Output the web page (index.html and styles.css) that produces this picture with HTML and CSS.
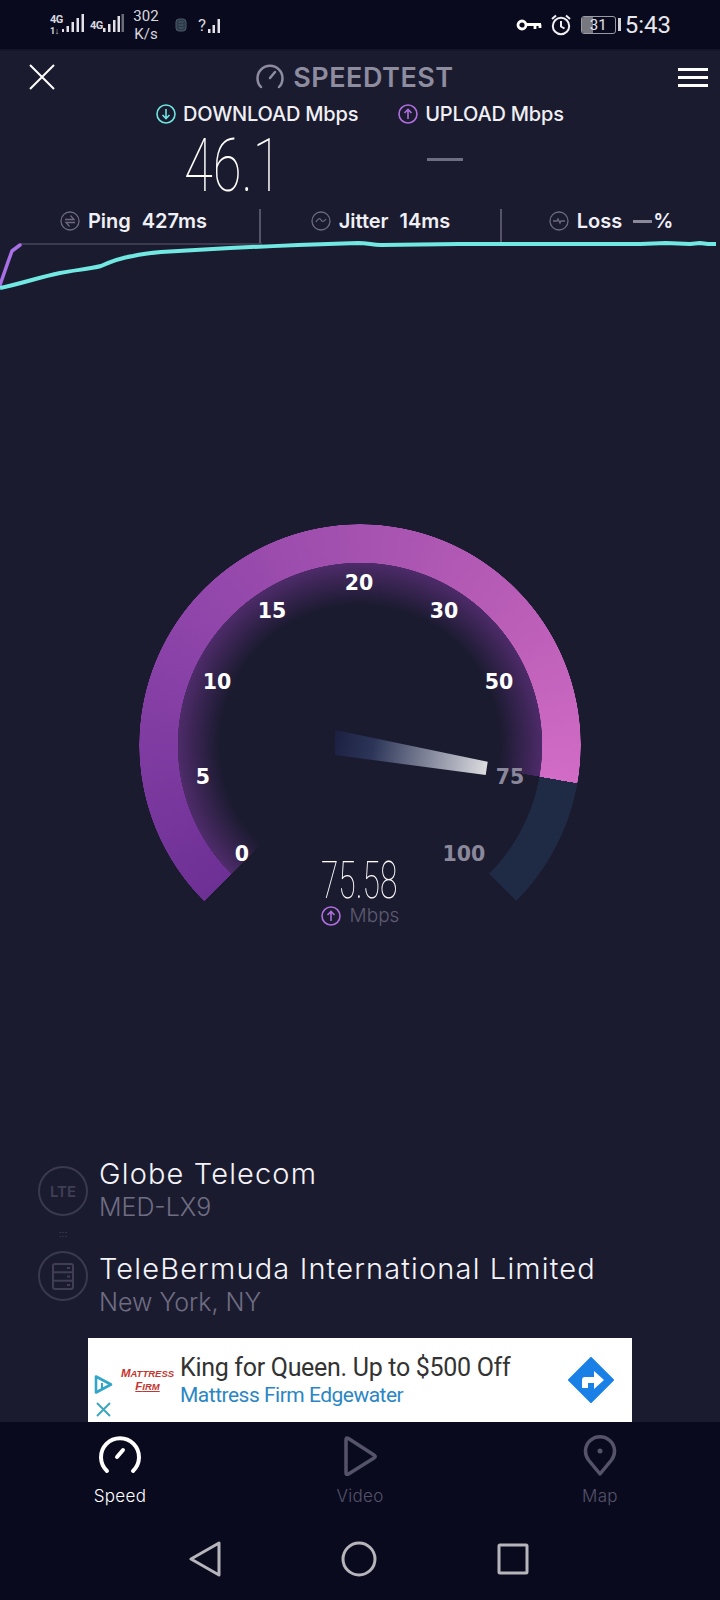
FILE: index.html
```html
<!DOCTYPE html>
<html lang="en">
<head>
  <meta charset="UTF-8">
  <meta name="viewport" content="width=device-width, initial-scale=1.0">
  <title>Speedtest</title>
  <link rel="stylesheet" href="styles.css">
</head>
<body>
  <div class="phone">
    <!-- status bar -->
    <div class="status">
      <div class="status-left">
        <div class="net-tag"><span>4G</span><span class="net-sub">1↓</span></div>
        <svg class="bars" width="22" height="20" viewBox="0 0 22 20"><path d="M0 16h2v3H0zM4.500 13H7v6H4.500zM9.500 9H12v10H9.500zM14.500 5H17v14h-2.500zM19.500 1H22v18h-2.500z"/></svg>
        <div class="net-tag net-tag-one"><span>4G</span></div>
        <svg class="bars" width="22" height="20" viewBox="0 0 22 20"><path d="M1 15h2.500v4H1zM6 11h2.500v8H6zM11 7h2.500v12H11zM15.500 3H18v16h-2.500z"/><path class="dim" d="M19.500 1H22v18h-2.500z"/></svg>
        <div class="rate"><span>302</span><span>K/s</span></div>
        <svg class="chip" width="12" height="14" viewBox="0 0 12 14"><rect x="1" y="1" width="10" height="12" rx="3"/><path d="M3.500 4h5M3.500 7h5M3.500 10h5"/></svg>
        <div class="wifi"><span>?</span><svg class="bars" width="12" height="14" viewBox="0 0 12 14"><path d="M0 10h2.500v4H0zM4.500 6H7v8H4.500zM9.500 0H12v14H9.500z"/></svg></div>
      </div>
      <div class="status-right">
        <svg class="key" width="26" height="14" viewBox="0 0 26 14"><circle cx="6" cy="7" r="4" /><path d="M10 6.500h15M19 6.500v4.500M24 6.500v3.500"/></svg>
        <svg class="alarm" width="22" height="22" viewBox="0 0 22 22"><circle cx="11" cy="12" r="8.200"/><path d="M11 7v5.500l3.500 2M2 5l4-3.500M20 5l-4-3.500"/></svg>
        <div class="battery"><div class="battery-box"><div class="battery-fill"></div><span>31</span></div><div class="battery-nub"></div></div>
        <div class="clock">5:43</div>
      </div>
    </div>

    <!-- header -->
    <div class="top">
      <svg class="close" width="26" height="26" viewBox="0 0 26 26"><path d="M1 1l24 24M25 1L1 25"/></svg>
      <div class="brand">
        <svg width="28" height="26" viewBox="0 0 28 26"><path d="M5 23a12.500 12.500 0 1 1 18 0M14 14l5-6"/></svg>
        <span>SPEEDTEST</span>
      </div>
      <div class="menu"><i></i><i></i><i></i></div>
    </div>

    <div class="legend">
      <div class="legend-item down">
        <svg width="20" height="20" viewBox="0 0 20 20"><circle cx="10" cy="10" r="9"/><path d="M10 5v9.500M6.500 11l3.500 3.500 3.500-3.500"/></svg>
        <span>DOWNLOAD Mbps</span>
      </div>
      <div class="legend-item up">
        <svg width="20" height="20" viewBox="0 0 20 20"><circle cx="10" cy="10" r="9"/><path d="M10 15V5.500M6.500 9L10 5.500 13.500 9"/></svg>
        <span>UPLOAD Mbps</span>
      </div>
    </div>

    <div class="values">
      <div class="value-down"><span>46.1</span></div>
      <div class="value-up"></div>
    </div>

    <div class="stats">
      <div class="stat stat-first">
        <svg width="20" height="20" viewBox="0 0 20 20"><circle cx="10" cy="10" r="9"/><path d="M5 8.500h9l-3.500-4M15 11.500H6l3.500 4"/></svg>
        <span class="stat-name">Ping</span><span>427ms</span>
      </div>
      <div class="stat stat-line">
        <svg width="20" height="20" viewBox="0 0 20 20"><circle cx="10" cy="10" r="9"/><path d="M5 11c2-4 4-4 5-2s3 2 5-1"/></svg>
        <span class="stat-name">Jitter</span><span>14ms</span>
      </div>
      <div class="stat stat-line">
        <svg width="20" height="20" viewBox="0 0 20 20"><circle cx="10" cy="10" r="9"/><path d="M4 10h4l1-2 2 4 1-2h4"/></svg>
        <span class="stat-name">Loss</span><span class="loss-value"><i></i>%</span>
      </div>
    </div>

    <svg class="chart" width="720" height="50" viewBox="0 240 720 50">
      <path class="chart-grid" d="M20 244H262"/>
      <path class="chart-up" d="M0 285L8 262 12 251 20 245"/>
      <path class="chart-down" d="M0 288C20 284 40 277 60 273 75 270 90 269 101 266 112 261 120 258 133 256 142 254 150 253 161 252L230 248C255 247 275 246 298 245L358 243C368 243 372 245 381 245L459 244 597 244 640 244 666 243 690 244 700 243 708 244 716 244"/>
    </svg>

    <!-- gauge -->
    <div class="gauge">
      <div class="gauge-glow"></div>
      <div class="gauge-ring"></div>
      <svg class="gauge-marks" width="442" height="442" viewBox="0 0 442 442">
        <defs>
          <linearGradient id="needle" gradientUnits="userSpaceOnUse" x1="196" y1="215" x2="348" y2="244">
            <stop offset="0" stop-color="#1c2142"/>
            <stop offset="0.25" stop-color="#2c3558"/>
            <stop offset="1" stop-color="#dcdce0"/>
          </linearGradient>
        </defs>
        <path d="M196 206L348.700 237.700 346.700 251 196 231z" fill="url(#needle)"/>
        <text x="220" y="66">20</text>
        <text x="133" y="94">15</text>
        <text x="305" y="94">30</text>
        <text x="78" y="165">10</text>
        <text x="360" y="165">50</text>
        <text x="64" y="260">5</text>
        <text class="off" x="371" y="260">75</text>
        <text x="103" y="337">0</text>
        <text class="off" x="325" y="337">100</text>
      </svg>
      <div class="gauge-reading">
        <div class="reading-num"><span>75.58</span></div>
        <div class="reading-unit">
          <svg width="20" height="20" viewBox="0 0 20 20"><circle cx="10" cy="10" r="9"/><path d="M10 15V5.500M6.500 9L10 5.500 13.500 9"/></svg>
          <span>Mbps</span>
        </div>
      </div>
    </div>

    <!-- connection -->
    <div class="conn">
      <div class="conn-row">
        <div class="conn-icon"><span>LTE</span></div>
        <div class="conn-text">
          <div class="conn-name">Globe Telecom</div>
          <div class="conn-sub">MED-LX9</div>
        </div>
      </div>
      <div class="conn-dots">:::</div>
      <div class="conn-row">
        <div class="conn-icon">
          <svg width="22" height="27" viewBox="0 0 22 27"><rect x="1" y="1" width="20" height="25" rx="2"/><path d="M1 9.300h20M1 17.700h20M15 5h3M15 13.500h3M15 22h3"/></svg>
        </div>
        <div class="conn-text conn-text-low">
          <div class="conn-name">TeleBermuda International Limited</div>
          <div class="conn-sub">New York, NY</div>
        </div>
      </div>
    </div>

    <!-- ad -->
    <div class="ad">
      <div class="ad-marks">
        <svg width="19" height="21" viewBox="0 0 19 21"><path class="ad-play" d="M2 2.500L17 10.500 2 18.500z"/><path class="ad-play-i" d="M8 9v6M8 5.500v1.500"/></svg>
        <svg width="15" height="15" viewBox="0 0 15 15"><path class="ad-x" d="M1 1l13 13M14 1L1 14"/></svg>
      </div>
      <div class="ad-logo"><span>Mattress</span><span class="ad-logo-firm">Firm</span></div>
      <div class="ad-copy">
        <div class="ad-title">King for Queen. Up to $500 Off</div>
        <div class="ad-sub">Mattress Firm Edgewater</div>
      </div>
      <svg class="ad-go" width="46" height="46" viewBox="0 0 46 46"><path class="ad-diamond" d="M23 1l22 22-22 22L1 23z"/><path class="ad-arrow" d="M14 31v-8c0-2 1-3 3-3h9v-6l10 9-10 9v-6h-6v5z"/></svg>
    </div>

    <!-- tabs -->
    <div class="bottom">
      <div class="tabs">
        <div class="tab tab-on">
          <svg width="44" height="42" viewBox="0 0 44 42"><path d="M9 37a19 19 0 1 1 26 0M19 23l6-7"/></svg>
          <span>Speed</span>
        </div>
        <div class="tab">
          <svg width="44" height="42" viewBox="0 0 44 42"><path d="M8 6v33q0 2.500 2.500 1L36 24q2.500-1.500 0-3L10.500 4.500Q8 3 8 6z"/></svg>
          <span>Video</span>
        </div>
        <div class="tab">
          <svg width="44" height="42" viewBox="0 0 44 42"><path d="M22 40L10.500 26a14.500 14.500 0 1 1 23 0z"/><circle class="pin-dot" cx="22" cy="17" r="2.500"/></svg>
          <span>Map</span>
        </div>
      </div>
      <div class="nav">
        <svg width="32" height="36" viewBox="0 0 32 36"><path d="M30 2v32L2 18z"/></svg>
        <svg width="36" height="36" viewBox="0 0 36 36"><circle cx="18" cy="18" r="16"/></svg>
        <svg width="32" height="32" viewBox="0 0 32 32"><rect x="2" y="2" width="28" height="28" rx="1"/></svg>
      </div>
    </div>
  </div>
</body>
</html>
```

FILE: styles.css
```css
* { box-sizing: border-box; }
html, body { margin: 0; padding: 0; background: #1b1b30; }
body { font-family: Inter, "Open Sans", sans-serif; color: #fff; }
svg { display: block; }
.phone {
  width: 720px;
  height: 1600px;
  overflow: hidden;
  background: #1b1b30;
  display: flex;
  flex-direction: column;
}

/* status bar */
.status {
  height: 49px;
  flex: none;
  background: #0a0a1e;
  display: flex;
  justify-content: space-between;
  align-items: center;
  padding: 0 49px 0 50px;
  font-family: Roboto, sans-serif;
  color: #d8d8de;
}
.status-left, .status-right { display: flex; align-items: center; }
.status-left .bars { fill: #e2e2e8; }
.status-left .bars .dim { fill: #6d6d7a; }
.net-tag {
  width: 12px;
  display: flex;
  flex-direction: column;
  font-size: 11px;
  line-height: 13px;
  font-weight: 700;
  letter-spacing: -0.5px;
}
.net-sub { font-size: 9px; line-height: 11px; }
.net-tag-one { margin-left: 6px; align-self: flex-start; margin-top: 12px; }
.net-tag + .bars { margin-top: -3px; }
.rate {
  display: flex;
  flex-direction: column;
  align-items: center;
  margin-left: 10px;
  font-size: 15px;
  line-height: 18px;
  width: 24px;
}
.chip { margin-left: 17px; fill: #2b3a4a; stroke: #4d5a68; stroke-width: 1; }
.wifi { display: flex; align-items: flex-end; margin-left: 11px; font-size: 17px; line-height: 20px; }
.wifi .bars { margin-left: 2px; margin-bottom: 2px; }
.key { fill: none; stroke: #fff; stroke-width: 2.800; margin-right: 8px; }
.alarm { fill: none; stroke: #f0f0f4; stroke-width: 2; margin-right: 9px; }
.battery { display: flex; align-items: center; margin-right: 4px; }
.battery-box {
  position: relative;
  width: 35px;
  height: 18px;
  border: 1px solid #9a9aa4;
  border-radius: 3px;
  overflow: hidden;
  text-align: center;
  font-size: 15px;
  line-height: 16px;
  color: #e4e4ea;
}
.battery-box span { position: relative; }
.battery-fill { position: absolute; left: 0; top: 0; bottom: 0; width: 11px; background: #77777f; }
.battery-nub { width: 3px; height: 13px; margin-left: 2px; background: #d0d0d6; }
.clock { font-size: 24px; line-height: 28px; color: #e8e8ec; }

/* header */
.top {
  position: relative;
  height: 54px;
  flex: none;
  display: flex;
  justify-content: space-between;
  align-items: center;
  padding: 0 12px 0 29px;
  border-top: 2px solid #14142a;
}
.close { fill: none; stroke: #fff; stroke-width: 2; }
.brand {
  display: flex;
  align-items: center;
  gap: 9px;
  margin-right: 23px;
  color: #8e8c9f;
  font-size: 27px;
  font-weight: 600;
  letter-spacing: 0.5px;
}
.brand svg { fill: none; stroke: #8e8c9f; stroke-width: 2.500; stroke-linecap: round; }
.menu { width: 30px; display: flex; flex-direction: column; gap: 5px; }
.menu i { display: block; height: 3px; background: #fff; }

.legend {
  height: 22px;
  flex: none;
  display: flex;
  padding-left: 156px;
  gap: 40px;
}
.legend-item { display: flex; align-items: center; gap: 7px; font-size: 20px; font-weight: 500; letter-spacing: -0.2px; color: #f0f0f4; }
.legend-item svg, .reading-unit svg { fill: none; stroke-width: 1.600; stroke: #b06ee0; }
.legend-item.down svg { stroke: #6ee6e0; }

.values { height: 79px; flex: none; display: flex; }
.value-down { width: 427px; padding: 5px 0 0 184px; }
.value-down span {
  display: block;
  width: 90px;
  font-family: Roboto, sans-serif;
  font-weight: 100;
  font-size: 74px;
  line-height: 72px;
  white-space: nowrap;
  transform: scaleX(0.71);
  transform-origin: 0 0;
}
.value-up { width: 36px; height: 3px; margin-top: 33px; background: #6f6d80; }

.stats {
  height: 31px;
  flex: none;
  margin-top: 5px;
  display: grid;
  grid-template-columns: 259px 241px 220px;
  font-size: 20px;
  font-weight: 600;
  color: #f0f0f4;
}
.stat { display: flex; justify-content: center; align-items: center; gap: 8px; padding-bottom: 10px; }
.stat-first { padding-left: 8px; }
.stat-line { border-left: 2px solid #55536a; }
.stat svg { fill: none; stroke: #6c6a7e; stroke-width: 1.300; }
.stat-name { margin-right: 3px; }
.loss-value { display: flex; align-items: center; gap: 1px; }
.loss-value i { display: block; width: 19px; height: 3px; background: #8a889a; }

.chart { flex: none; fill: none; }
.chart-grid { stroke: #5c5a6e; stroke-width: 1; }
.chart-up { stroke: #a970e6; stroke-width: 3.500; stroke-linejoin: round; stroke-linecap: round; }
.chart-down { stroke: #72e8e2; stroke-width: 4; stroke-linejoin: round; }

/* gauge, a free canvas */
.gauge {
  position: relative;
  flex: none;
  width: 442px;
  height: 400px;
  margin: 234px 0 0 139px;
}
.gauge-ring, .gauge-glow {
  position: absolute;
  left: 0;
  top: 0;
  width: 442px;
  height: 442px;
  border-radius: 50%;
}
.gauge-ring {
  background: conic-gradient(from 225deg, #6d3095 0deg, #8a42a8 70deg, #a552b0 135deg, #bc5fb8 190deg, #d26cc6 235deg, #1f2a45 235deg, #1f2a45 270deg, transparent 270deg);
  -webkit-mask: radial-gradient(circle, transparent 182px, #000 182.500px, #000 220.500px, transparent 221px);
  mask: radial-gradient(circle, transparent 182px, #000 182.500px, #000 220.500px, transparent 221px);
}
.gauge-glow {
  background: conic-gradient(from 225deg, #5b3078 0deg, #5a2f78 235deg, transparent 235deg);
  -webkit-mask: radial-gradient(circle, transparent 140px, rgba(0,0,0,0.8) 182px, transparent 182.500px);
  mask: radial-gradient(circle, transparent 140px, rgba(0,0,0,0.8) 182px, transparent 182.500px);
}
.gauge-marks { position: absolute; left: 0; top: 0; }
.gauge-marks text { fill: #fff; font-family: "DejaVu Sans", sans-serif; font-size: 20.500px; font-weight: 700; text-anchor: middle; }
.gauge-marks text.off { fill: #8a889a; }
.gauge-reading {
  position: absolute;
  left: 0;
  right: 0;
  top: 334px;
  display: flex;
  flex-direction: column;
  align-items: center;
}
.reading-num { width: 78px; height: 46px; }
.reading-num span {
  display: block;
  font-family: Roboto, sans-serif;
  font-weight: 100;
  font-size: 52px;
  line-height: 46px;
  white-space: nowrap;
  transform: scaleX(0.61);
  transform-origin: 0 0;
}
.reading-unit { display: flex; align-items: center; gap: 9px; font-size: 19px; font-weight: 300; color: #5e5c70; }

/* connection */
.conn { flex: none; margin-left: 38px; padding-top: 236px; height: 414px; }
.conn-row { display: flex; align-items: center; gap: 11px; height: 62px; }
.conn-icon {
  width: 50px;
  height: 50px;
  flex: none;
  border: 2px solid #3a394e;
  border-radius: 50%;
  display: flex;
  align-items: center;
  justify-content: center;
  color: #3f3e54;
  font-size: 15px;
  font-weight: 600;
}
.conn-icon svg { fill: none; stroke: #3f3e54; stroke-width: 2; }
.conn-text { margin-top: -1px; }
.conn-text-low { margin-top: 19px; }
.conn-name { font-size: 29px; line-height: 32px; font-weight: 300; letter-spacing: 1.150px; color: #f4f4f8; white-space: nowrap; }
.conn-sub { font-size: 25px; line-height: 34px; font-weight: 300; color: #6f6d82; }
.conn-dots { width: 50px; height: 23px; text-align: center; color: #3f3e54; font-size: 10px; line-height: 23px; }

/* ad */
.ad {
  flex: none;
  width: 544px;
  height: 84px;
  margin-left: 88px;
  background: #fff;
  display: flex;
  align-items: center;
  color: #333;
  font-family: Roboto, sans-serif;
}
.ad-marks { width: 27px; height: 84px; display: flex; flex-direction: column; align-items: center; justify-content: flex-end; gap: 7px; padding: 0 0 5px 3px; flex: none; }
.ad-play { fill: none; stroke: #31a6c8; stroke-width: 2.600; stroke-linejoin: round; }
.ad-play-i { fill: none; stroke: #31a6c8; stroke-width: 2; }
.ad-x { fill: none; stroke: #3ea7bf; stroke-width: 2; }
.ad-logo {
  width: 65px;
  flex: none;
  display: flex;
  flex-direction: column;
  align-items: center;
  font-family: "Liberation Sans", sans-serif;
  font-style: italic;
  font-weight: 700;
  text-transform: uppercase;
  font-size: 9.500px;
  line-height: 12px;
  color: #c4352e;
}
.ad-logo span::first-letter { font-size: 11.500px; }
.ad-logo-firm { text-decoration: underline; }
.ad-copy { flex: 1; margin-top: -2px; }
.ad-title { font-size: 25px; line-height: 32px; letter-spacing: -0.3px; color: #333; }
.ad-sub { font-size: 21px; line-height: 22px; letter-spacing: -0.5px; color: #2a86c4; }
.ad-go { flex: none; margin-right: 18px; }
.ad-diamond { fill: #1a80e6; stroke: #1a80e6; stroke-width: 2; stroke-linejoin: round; }
.ad-arrow { fill: #fff; }

/* bottom */
.bottom { flex: 1; background: #0a0a1e; display: flex; flex-direction: column; }
.tabs { height: 95px; flex: none; display: flex; padding-top: 12px; }
.tab {
  width: 240px;
  display: flex;
  flex-direction: column;
  align-items: center;
  gap: 9px;
  font-size: 17px;
  line-height: 22px;
  font-weight: 300;
  letter-spacing: 0.3px;
  color: #55536a;
}
.tab svg { fill: none; stroke: #55536a; stroke-width: 3.500; stroke-linecap: round; stroke-linejoin: round; }
.tab .pin-dot { fill: #55536a; stroke: none; }
.tab-on { color: #fff; }
.tab-on svg { stroke: #fff; stroke-width: 4; }
.nav { flex: 1; display: flex; justify-content: center; align-items: center; gap: 120px; padding-right: 3px; }
.nav svg { fill: none; stroke: #b5b5bb; stroke-width: 3; stroke-linejoin: round; }
```
